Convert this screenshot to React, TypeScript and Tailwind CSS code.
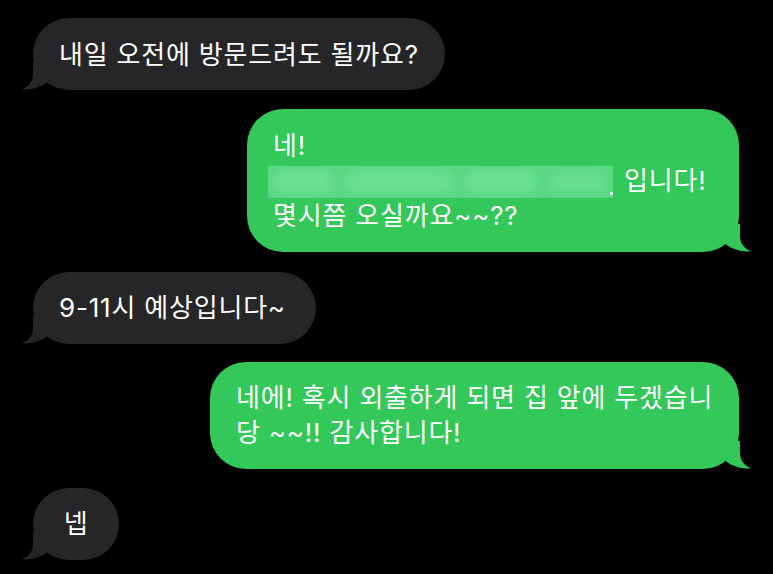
import React from "react";

type Side = "in" | "out";

const Tail = ({ side }: { side: Side }) => (
  <svg
    width="30"
    height="28"
    viewBox="0 0 30 28"
    className={
      side === "in"
        ? "absolute -left-[11px] bottom-0"
        : "absolute -right-[12px] bottom-0 -scale-x-100"
    }
  >
    <path
      d="M11 0 L11 12 C11 20 6 25 0 27.2 C8 28.4 18 25.5 25 20.5 L25 0 Z"
      fill={side === "in" ? "#262628" : "#34c759"}
    />
  </svg>
);

const Bubble = ({
  side,
  className,
  children,
}: {
  side: Side;
  className: string;
  children: React.ReactNode;
}) => (
  <div
    className={
      "relative rounded-[36px] px-[26px] py-[18.5px] text-[26px] leading-[35px] tracking-[0.8px] text-white whitespace-nowrap " +
      (side === "in" ? "bg-[#262628] self-start ml-[33px] " : "bg-[#34c759] self-end mr-[34px] ") +
      className
    }
  >
    <Tail side={side} />
    <span className="relative">{children}</span>
  </div>
);

const Redacted = () => (
  <span className="relative inline-block align-middle w-[345px] h-[32px] -ml-[5px] overflow-hidden bg-[#58d780]">
    <span className="absolute inset-0 flex items-center gap-[14px] px-[6px] blur-[6px]">
      <span className="h-[22px] w-[60px] bg-[#6ee093]" />
      <span className="h-[22px] w-[110px] bg-[#6ae091]" />
      <span className="h-[22px] w-[70px] bg-[#6ee093]" />
      <span className="h-[22px] w-[60px] bg-[#66dd8d]" />
    </span>
    <span className="absolute right-0 bottom-[3px] w-[3px] h-[3px] bg-white/80" />
  </span>
);

export default function App() {
  return (
    <div
      className="w-[773px] h-[574px] bg-black flex flex-col pt-[18px] overflow-hidden"
      style={{ fontFamily: 'Inter, "Noto Sans CJK KR", sans-serif' }}
    >
      <Bubble side="in" className="w-[412px]">
        내일 오전에 방문드려도 될까요?
      </Bubble>
      <Bubble side="out" className="w-[492px] mt-[19px]">
        네!
        <br />
        <Redacted />
        <span className="ml-[11px]">입니다!</span>
        <br />
        몇시쯤 오실까요~~??
      </Bubble>
      <Bubble side="in" className="w-[283px] mt-[20px]">
        9-11시 예상입니다~
      </Bubble>
      <Bubble side="out" className="w-[529px] mt-[18px]">
        네에! 혹시 외출하게 되면 집 앞에 두겠습니
        <br />당 ~~!! 감사합니다!
      </Bubble>
      <Bubble side="in" className="w-[86px] mt-[19px] text-center">
        넵
      </Bubble>
    </div>
  );
}
